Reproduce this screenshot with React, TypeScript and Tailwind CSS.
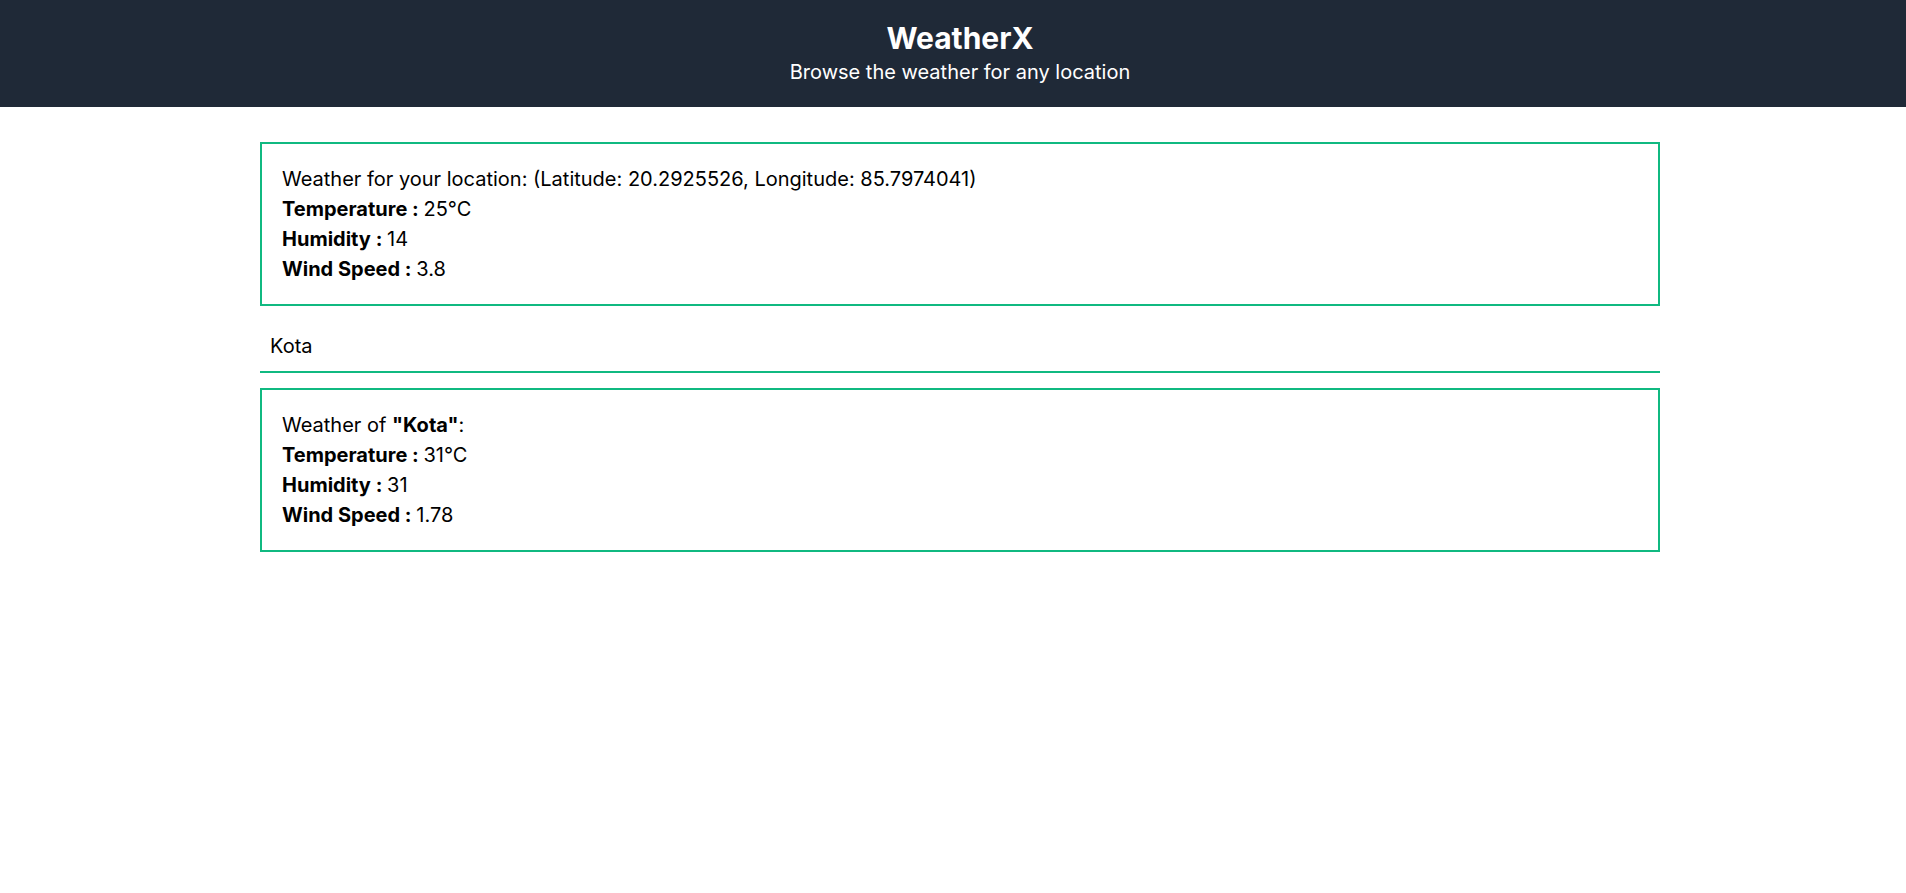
import React from "react";

function Card({ children }: { children: React.ReactNode }) {
  return (
    <div className="border-2 border-[#10b981] p-5 text-[20px] leading-[30px] text-black">
      {children}
    </div>
  );
}

export default function App() {
  return (
    <div className="w-full overflow-hidden bg-white min-h-[893px]" style={{ fontFamily: "Inter, 'Noto Sans', sans-serif" }}>
      <div className="w-[1920px]">
        <header className="h-[107px] bg-[#1f2937] text-white flex flex-col items-center justify-center">
          <h1 className="text-[30px] leading-[36px] font-bold">WeatherX</h1>
          <p className="text-[20px] leading-[32px]">Browse the weather for any location</p>
        </header>
        <main className="w-[1400px] mx-auto mt-[35px] flex flex-col">
          <Card>
            <div>Weather for your location: (Latitude: 20.2925526, Longitude: 85.7974041)</div>
            <div><span className="font-bold">Temperature : </span>25°C</div>
            <div><span className="font-bold">Humidity : </span>14</div>
            <div><span className="font-bold">Wind Speed : </span>3.8</div>
          </Card>
          <input
            className="mt-[17px] h-[50px] w-full border-b-2 border-[#10b981] px-[10px] pb-[2px] text-[20px] text-black outline-none"
            defaultValue="Kota"
          />
          <div className="mt-[15px]">
            <Card>
              <div>Weather of <span className="font-bold">"Kota"</span>:</div>
              <div><span className="font-bold">Temperature : </span>31°C</div>
              <div><span className="font-bold">Humidity : </span>31</div>
              <div><span className="font-bold">Wind Speed : </span>1.78</div>
            </Card>
          </div>
        </main>
      </div>
    </div>
  );
}
